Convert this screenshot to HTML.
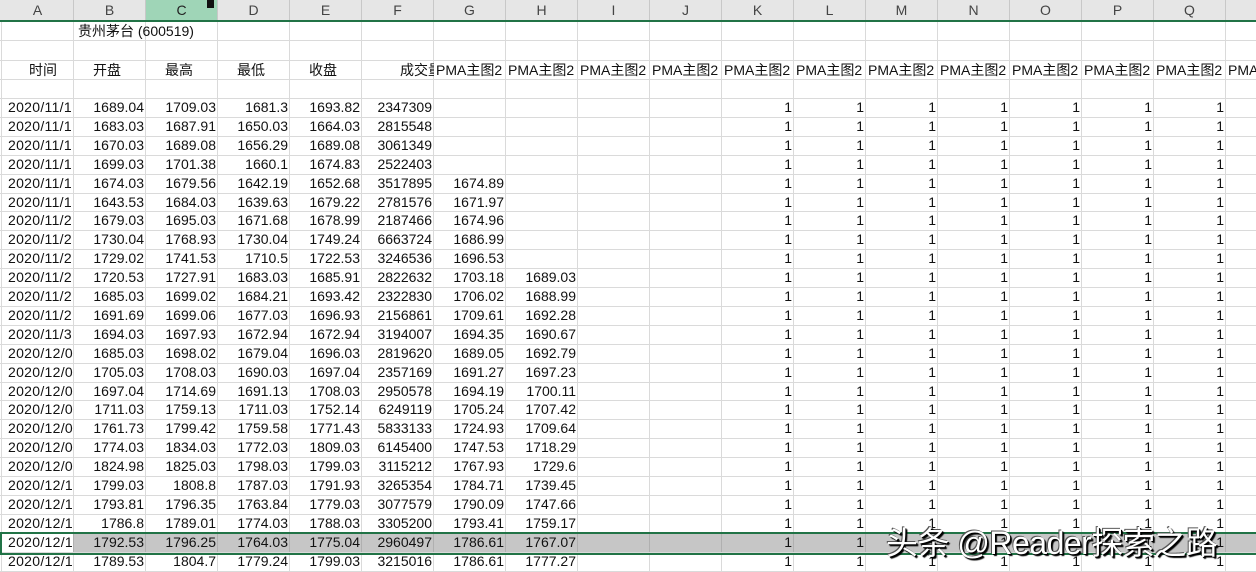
<!DOCTYPE html>
<html><head><meta charset="utf-8"><style>
body{margin:0;width:1256px;height:572px;overflow:hidden;background:#fff;font-family:"Liberation Sans","Noto Sans CJK SC",sans-serif;font-size:14px;color:#111;position:relative}
.hd{position:absolute;top:0;left:0;width:1256px;height:20px;background:#e6e6e6;border-bottom:2px solid #217346;box-sizing:content-box}
.hc{position:absolute;top:0;height:20px;line-height:20px;text-align:center;color:#444;font-size:14px;border-right:1px solid #c8c8c8;box-sizing:border-box}
.vl{position:absolute;top:22px;bottom:0;width:1px;background:#dadada}
.hl{position:absolute;left:0;width:1256px;height:1px;background:#dadada}
.c{position:absolute;height:19px;line-height:19px;white-space:nowrap;overflow:hidden;box-sizing:border-box;padding:0 2px}
.r{text-align:right}
</style></head><body>
<div id="g"></div>
<script>
const cols=[2,74,146,218,290,362,434,506,578,650,722,794,866,938,1010,1082,1154,1226,1298];
const L="ABCDEFGHIJKLMNOPQR";
let h='<div class="hd"></div>';
for(let i=0;i<18;i++){h+=`<div class="hc" style="left:${cols[i]}px;width:${cols[i+1]-cols[i]}px;${i==2?'background:#9fd5b7;color:#222;':''}">${L[i]}</div>`;}
for(let i=0;i<19;i++)h+=`<div class="vl" style="left:${cols[i]-1}px"></div>`;
for(let y of [40,60,79,98])h+=`<div class="hl" style="top:${y}px"></div>`;
const RH=18.9;
for(let i=1;i<26;i++)h+=`<div class="hl" style="top:${Math.round(98+RH*i)}px"></div>`;
const D=[
["2020/11/1","1689.04","1709.03","1681.3","1693.82","2347309","",""],
["2020/11/1","1683.03","1687.91","1650.03","1664.03","2815548","",""],
["2020/11/1","1670.03","1689.08","1656.29","1689.08","3061349","",""],
["2020/11/1","1699.03","1701.38","1660.1","1674.83","2522403","",""],
["2020/11/1","1674.03","1679.56","1642.19","1652.68","3517895","1674.89",""],
["2020/11/1","1643.53","1684.03","1639.63","1679.22","2781576","1671.97",""],
["2020/11/2","1679.03","1695.03","1671.68","1678.99","2187466","1674.96",""],
["2020/11/2","1730.04","1768.93","1730.04","1749.24","6663724","1686.99",""],
["2020/11/2","1729.02","1741.53","1710.5","1722.53","3246536","1696.53",""],
["2020/11/2","1720.53","1727.91","1683.03","1685.91","2822632","1703.18","1689.03"],
["2020/11/2","1685.03","1699.02","1684.21","1693.42","2322830","1706.02","1688.99"],
["2020/11/2","1691.69","1699.06","1677.03","1696.93","2156861","1709.61","1692.28"],
["2020/11/3","1694.03","1697.93","1672.94","1672.94","3194007","1694.35","1690.67"],
["2020/12/0","1685.03","1698.02","1679.04","1696.03","2819620","1689.05","1692.79"],
["2020/12/0","1705.03","1708.03","1690.03","1697.04","2357169","1691.27","1697.23"],
["2020/12/0","1697.04","1714.69","1691.13","1708.03","2950578","1694.19","1700.11"],
["2020/12/0","1711.03","1759.13","1711.03","1752.14","6249119","1705.24","1707.42"],
["2020/12/0","1761.73","1799.42","1759.58","1771.43","5833133","1724.93","1709.64"],
["2020/12/0","1774.03","1834.03","1772.03","1809.03","6145400","1747.53","1718.29"],
["2020/12/0","1824.98","1825.03","1798.03","1799.03","3115212","1767.93","1729.6"],
["2020/12/1","1799.03","1808.8","1787.03","1791.93","3265354","1784.71","1739.45"],
["2020/12/1","1793.81","1796.35","1763.84","1779.03","3077579","1790.09","1747.66"],
["2020/12/1","1786.8","1789.01","1774.03","1788.03","3305200","1793.41","1759.17"],
["2020/12/1","1792.53","1796.25","1764.03","1775.04","2960497","1786.61","1767.07"],
["2020/12/1","1789.53","1804.7","1779.24","1799.03","3215016","1786.61","1777.27"]];
let sy=Math.round(98+RH*23);
h+=`<div style="position:absolute;left:74px;top:${sy}px;width:1182px;height:19px;background:#c6c6c6"></div>`;
for(let i=1;i<18;i++)h+=`<div style="position:absolute;left:${cols[i]-1}px;top:${sy}px;width:1px;height:19px;background:#b0b0b0"></div>`;
h+=`<div class="c" style="left:78px;width:140px;top:22px;padding:0">贵州茅台 (600519)</div>`;
const H=["时间","开盘","最高","最低","收盘"];
const hx=[29,93,165,237,309];
H.forEach((t,i)=>h+=`<div class="c" style="left:${hx[i]}px;top:61px;padding:0">${t}</div>`);
h+=`<div class="c" style="left:362px;width:72px;top:61px;padding:0 0 0 38px">成交量</div>`;
for(let i=6;i<18;i++)h+=`<div class="c" style="left:${cols[i]}px;width:${cols[i+1]-cols[i]}px;top:61px;padding:0 0 0 2px">PMA主图2</div>`;
D.forEach((r,j)=>{let y=Math.round(98+RH*j);
 r.forEach((v,k)=>{if(v)h+=`<div class="c ${k?'r':''}" style="left:${cols[k]}px;width:${cols[k+1]-cols[k]}px;top:${y}px;${k?'':'padding-left:6px;letter-spacing:0.3px;'}">${v}</div>`;});
 for(let k=10;k<17;k++)h+=`<div class="c r" style="left:${cols[k]}px;width:${cols[k+1]-cols[k]}px;top:${y}px">1</div>`;
});
h+=`<div style="position:absolute;left:0;top:${sy-1}px;width:1256px;height:19px;border:2px solid #217346;border-right:none;box-sizing:content-box"></div>`;
h+=`<div style="position:absolute;left:886px;top:518px;font-size:32px;color:#fff;text-shadow:1px 1px 0 #000,2px 2px 1px #000,-1px -1px 0 #555;white-space:nowrap;letter-spacing:-0.5px">头条 @Reader探索之路</div>`;
h+=`<div style="position:absolute;left:207px;top:0;width:7px;height:8px;background:#111"></div>`;
document.getElementById('g').innerHTML=h;
</script>
</body></html>
